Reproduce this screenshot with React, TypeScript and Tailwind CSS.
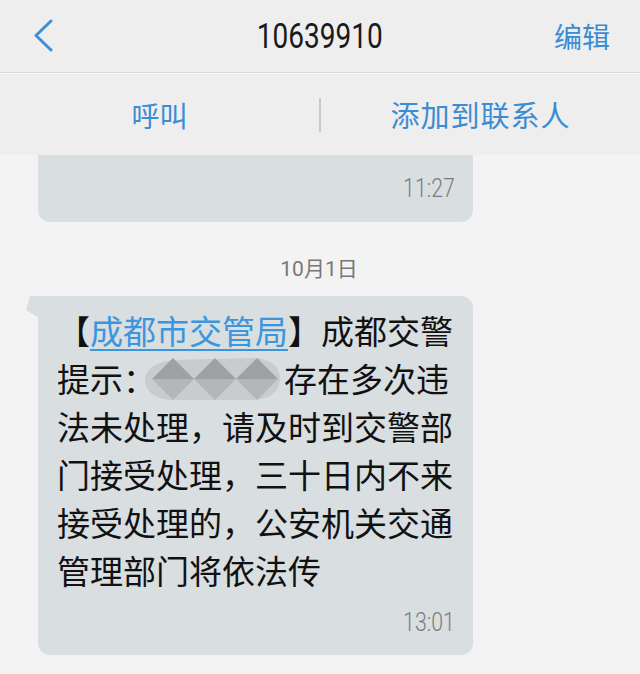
import React from "react";

const cjk = "font-['Noto_Sans_CJK_SC','Noto_Sans',sans-serif]";
const num = "font-['Roboto','Noto_Sans_CJK_SC',sans-serif]";

function Blob() {
  const diamonds = [31, 73, 115];
  return (
    <svg
      className="absolute left-[-14px] top-[-9px] w-[140px] h-[46px]"
      viewBox="0 0 140 46"
      preserveAspectRatio="none"
    >
      <path
        d="M3 24 C3 13 14 6 30 4 L110 2 C128 2 138 11 138 23 C138 35 128 44 110 44 L30 44 C14 44 3 35 3 24 Z"
        fill="#c9cbcd"
      />
      {diamonds.map((cx) => (
        <g key={cx}>
          <polygon points={`${cx - 21},23 ${cx},2 ${cx + 21},23`} fill="#9fa0a2" />
          <polygon points={`${cx - 21},23 ${cx},44 ${cx + 21},23`} fill="#b4b6b8" />
        </g>
      ))}
    </svg>
  );
}

export default function App() {
  return (
    <div className="w-[640px] h-[674px] overflow-hidden bg-[#f3f3f3] flex flex-col">
      {/* Header */}
      <div className="h-[72px] bg-[#eeeeee] grid grid-cols-[1fr_auto_1fr] items-center">
        <div className="pl-[34px] flex items-center">
          <svg width="20" height="34" viewBox="0 0 20 34">
            <polyline
              points="17,2 2,16.5 17,31"
              fill="none"
              stroke="#3d8fd6"
              strokeWidth="3"
              strokeLinecap="round"
              strokeLinejoin="round"
            />
          </svg>
        </div>
        <div className={`${num} text-[35px] leading-none text-[#1a1a1a] scale-x-[0.8] origin-center`}>
          10639910
        </div>
        <div className="flex justify-end pr-[30px]">
          <span className={`${cjk} text-[28px] leading-none text-[#3a8cd4]`}>编辑</span>
        </div>
      </div>
      <div className="h-px bg-[#d7d7d7]" />
      <div className="h-px bg-[#f7f7f7]" />

      {/* Action bar */}
      <div className="h-[81px] bg-[#eeeeee] flex items-center">
        <div className="flex-1 flex justify-center">
          <span className={`${cjk} text-[28px] leading-none text-[#3a8cd4]`}>呼叫</span>
        </div>
        <div className="w-[2px] h-[34px] bg-[#c9c9c9]" />
        <div className="flex-1 flex justify-center">
          <span className={`${cjk} text-[29px] leading-none tracking-[1px] text-[#3a8cd4]`}>
            添加到联系人
          </span>
        </div>
      </div>

      {/* Messages */}
      <div className="flex flex-col">
        <div className="ml-[38px] w-[435px] h-[67px] bg-[#d9dee1] rounded-b-[12px] flex items-center justify-end pr-[18px]">
          <span className={`${num} font-light text-[25px] leading-none text-[#7b7b7b] scale-x-[0.85] origin-right`}>
            11:27
          </span>
        </div>

        <div className={`${num} mt-[36px] h-[22px] text-[21px] leading-[22px] text-[#777777] text-center pr-[2px]`}>
          10月1日
        </div>

        <div className="relative mt-[16px] ml-[38px] w-[435px] bg-[#d9dee1] rounded-[12px] rounded-tl-none pt-[10px] pb-[19px] pl-[19px] pr-[18px]">
          <svg className="absolute left-[-12px] top-0 w-[13px] h-[24px]" viewBox="0 0 13 24">
            <polygon points="13,0 4,0 0,14 13,22" fill="#d9dee1" />
          </svg>
          <div className={`${cjk} text-[33px] leading-[48px] text-[#111111] whitespace-nowrap`}>
            <div>
              【
              <span className="text-[#3b96de] underline decoration-[2px] underline-offset-[5px]">
                成都市交管局
              </span>
              】成都交警
            </div>
            <div>
              提示：
              <span className="relative inline-block w-[128px] h-[33px] align-[-6px]">
                <Blob />
              </span>
              存在多次违
            </div>
            <div>法未处理，请及时到交警部</div>
            <div>门接受处理，三十日内不来</div>
            <div>接受处理的，公安机关交通</div>
            <div>管理部门将依法传</div>
          </div>
          <div className="mt-[14px] h-[28px] flex items-center justify-end">
            <span className={`${num} font-light text-[25px] leading-none text-[#7b7b7b] scale-x-[0.85] origin-right`}>
              13:01
            </span>
          </div>
        </div>
      </div>
    </div>
  );
}
